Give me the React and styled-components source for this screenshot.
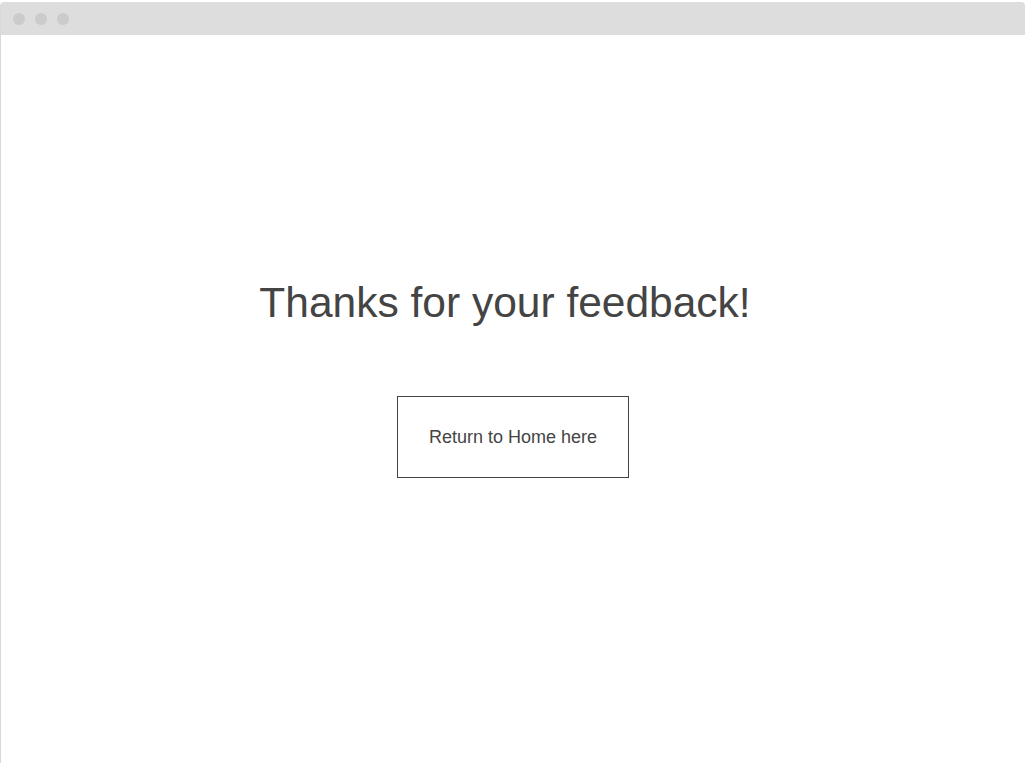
import React from "react";
import styled, { createGlobalStyle } from "styled-components";

const Global = createGlobalStyle`
  html, body { margin: 0; padding: 0; background: #fff; }
  body { font-family: "Liberation Sans", Arial, sans-serif; }
`;

const Frame = styled.div`
  margin-top: 2px;
  height: calc(100vh - 2px);
  box-sizing: border-box;
  border-left: 1px solid #d9d9d9;
  border-radius: 4px 4px 0 0;
  display: flex;
  flex-direction: column;
  overflow: hidden;
`;

const Bar = styled.div`
  height: 33px;
  background: #dddddd;
  display: flex;
  align-items: center;
  gap: 10px;
  padding-left: 12px;
  flex-shrink: 0;
`;

const Dot = styled.span`
  width: 12px;
  height: 12px;
  border-radius: 50%;
  background: #cbcbcb;
`;

const Content = styled.main`
  flex: 1;
  display: flex;
  flex-direction: column;
  align-items: center;
  padding-top: 245px;
`;

const Title = styled.h1`
  margin: 0;
  padding-right: 16px;
  font-size: 42.5px;
  line-height: 46px;
  font-weight: 400;
  color: #444;
`;

const HomeButton = styled.a`
  margin-top: 70px;
  width: 232px;
  height: 82px;
  box-sizing: border-box;
  border: 1px solid #444;
  display: flex;
  align-items: center;
  justify-content: center;
  font-size: 18px;
  color: #444;
  text-decoration: none;
  cursor: pointer;
`;

export default function App() {
  return (
    <>
      <Global />
      <Frame>
        <Bar>
          <Dot />
          <Dot />
          <Dot />
        </Bar>
        <Content>
          <Title>Thanks for your feedback!</Title>
          <HomeButton>Return to Home here</HomeButton>
        </Content>
      </Frame>
    </>
  );
}
